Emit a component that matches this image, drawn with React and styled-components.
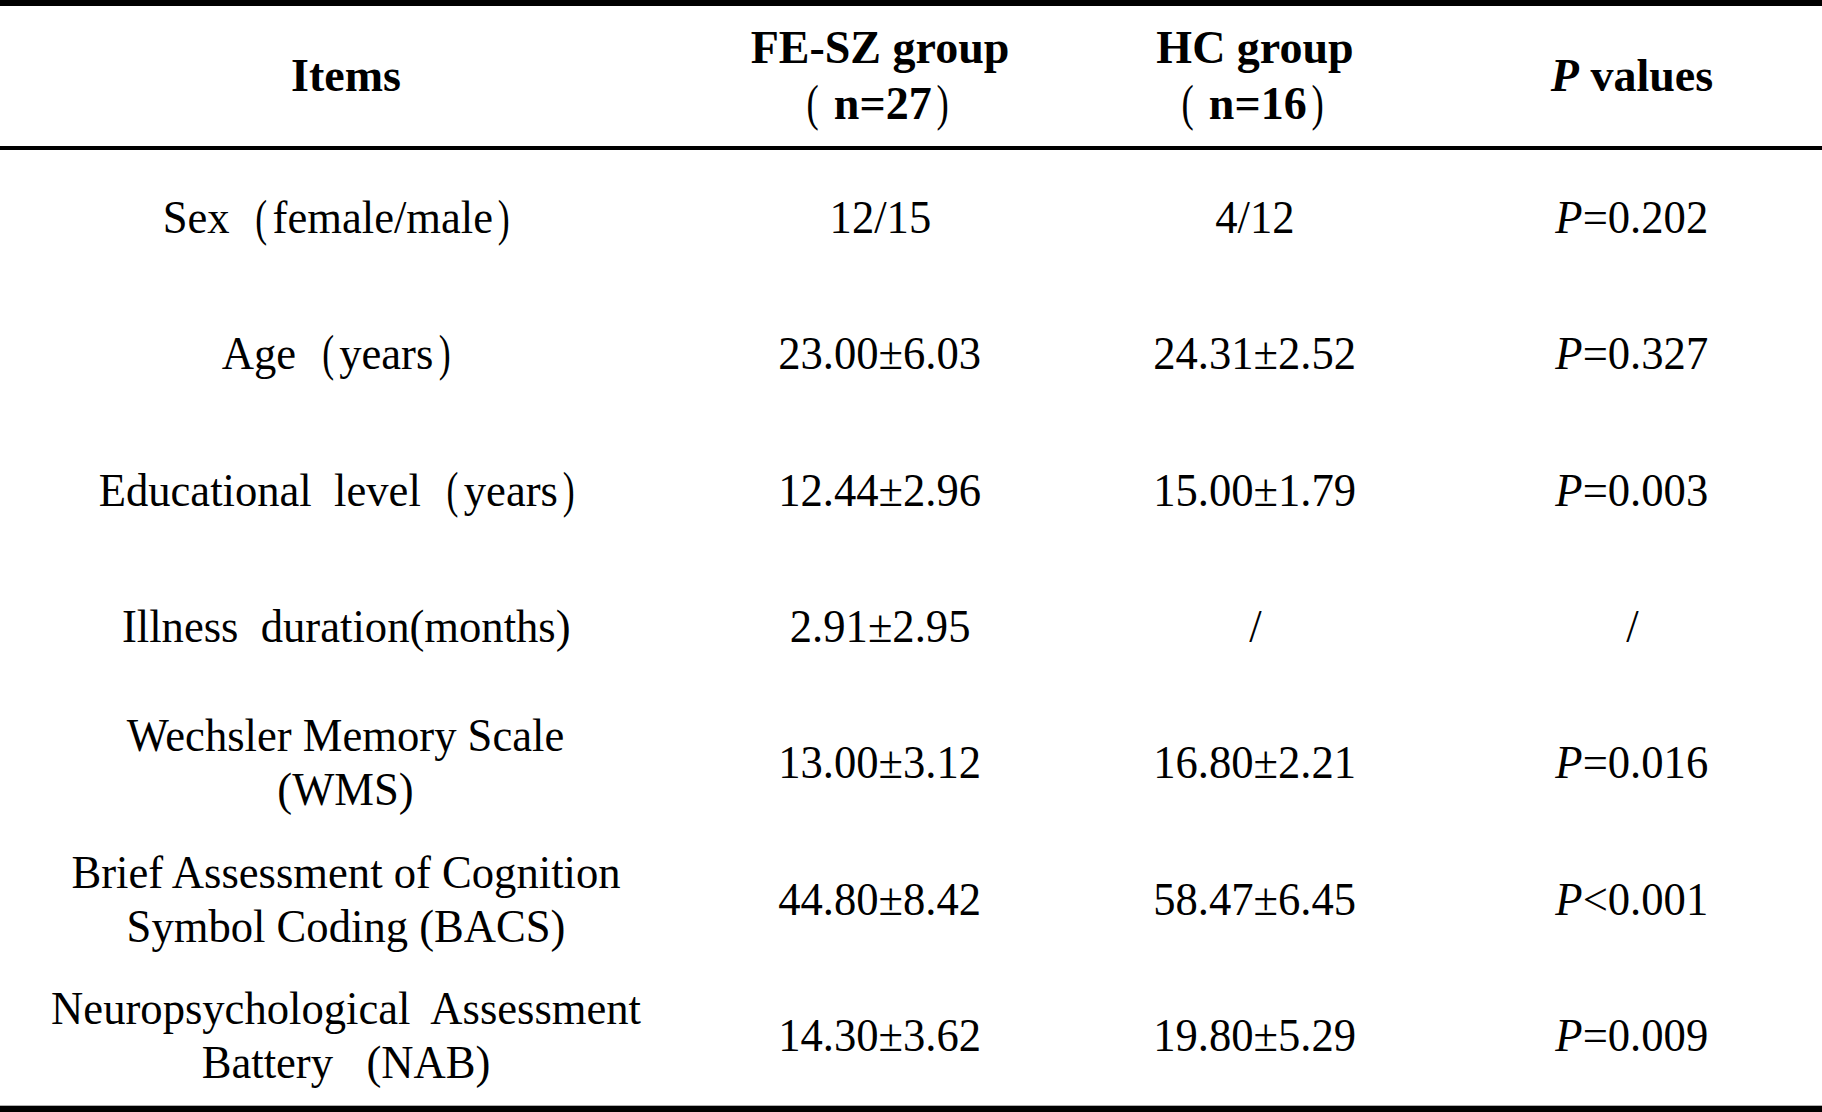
import React from 'react';
import styled, { createGlobalStyle } from 'styled-components';

// full-width brackets in the source are drawn as thin parens with wide side bearings
const withParens = (text, head) =>
  text.split(/([（）])/).map((part, i) => {
    if (part === '（') return <Paren key={i} $open $head={head}>(</Paren>;
    if (part === '）') return <Paren key={i} $head={head}>)</Paren>;
    return part;
  });

const rows = [
  { item: ['Sex（female/male）'], sz: '12/15', hc: '4/12', p: ['=', '0.202'] },
  { item: ['Age（years）'], sz: '23.00±6.03', hc: '24.31±2.52', p: ['=', '0.327'] },
  { item: ['Educational  level（years）'], sz: '12.44±2.96', hc: '15.00±1.79', p: ['=', '0.003'] },
  { item: ['Illness  duration(months)'], sz: '2.91±2.95', hc: '/', p: null },
  { item: ['Wechsler Memory Scale', '(WMS)'], sz: '13.00±3.12', hc: '16.80±2.21', p: ['=', '0.016'] },
  { item: ['Brief Assessment of Cognition', 'Symbol Coding (BACS)'], sz: '44.80±8.42', hc: '58.47±6.45', p: ['<', '0.001'] },
  { item: ['Neuropsychological  Assessment', 'Battery   (NAB)'], sz: '14.30±3.62', hc: '19.80±5.29', p: ['=', '0.009'] },
];

const App = () => {
  return (
    <>
      <GlobalStyle />
      <Table>
        <HeaderRow>
          <HeadCell><HeadText>Items</HeadText></HeadCell>
          <HeadCell><HeadText>FE-SZ group<br />{withParens('（n=27）', true)}</HeadText></HeadCell>
          <HeadCell><HeadText>HC group<br />{withParens('（n=16）', true)}</HeadText></HeadCell>
          <HeadCell><HeadText><i>P</i> values</HeadText></HeadCell>
        </HeaderRow>
        <Body>
          {rows.map((row) => (
            <Row key={row.item[0]}>
              <Cell>
                <Text>
                  {row.item.map((line, i) => (
                    <React.Fragment key={line}>
                      {i > 0 && <br />}
                      {withParens(line, false)}
                    </React.Fragment>
                  ))}
                </Text>
              </Cell>
              <Cell><Text>{row.sz}</Text></Cell>
              <Cell><Text>{row.hc}</Text></Cell>
              <Cell>
                <Text>
                  {row.p ? (
                    <>
                      <i>P</i>{row.p[0]}{row.p[1]}
                    </>
                  ) : '/'}
                </Text>
              </Cell>
            </Row>
          ))}
        </Body>
      </Table>
    </>
  );
};

export default App;

const GlobalStyle = createGlobalStyle`
  html, body {
    margin: 0;
    padding: 0;
    background: #ffffff;
  }
  body {
    font-family: 'Liberation Serif', 'Noto Sans CJK SC', serif;
    color: #000000;
  }
`;

const Table = styled.div`
  width: 1822px;
  height: 1112px;
  display: flex;
  flex-direction: column;
  border-top: 6px solid #000000;
  border-bottom: 6px solid #000000;
  box-sizing: border-box;
`;

const HeaderRow = styled.div`
  display: grid;
  grid-template-columns: 692px 376px 374px 1fr;
  height: 140px;
  border-bottom: 4px solid #000000;
  font-weight: bold;
  font-size: 46px;
  line-height: 56px;
`;

const HeadCell = styled.div`
  display: flex;
  align-items: center;
  justify-content: center;
  text-align: center;
`;

const Body = styled.div`
  flex: 1;
  display: grid;
  grid-template-rows: repeat(7, 1fr);
  padding-bottom: 1px;
  border-bottom: 1px solid #b0b0b0;
`;

const Row = styled.div`
  display: grid;
  grid-template-columns: 692px 376px 374px 1fr;
  font-size: 46px;
  line-height: 54px;
`;

const Cell = styled.div`
  display: flex;
  align-items: center;
  justify-content: center;
  text-align: center;
`;

const Text = styled.span`
  display: inline-block;
  white-space: pre;
  transform: scaleX(0.97);
`;

const HeadText = styled.span`
  display: inline-block;
  white-space: pre;
`;

const Paren = styled.span`
  display: inline-block;
  font-weight: normal;
  transform: scale(0.8, 1.1);
  margin-left: ${(p) => (p.$open ? (p.$head ? '0.3em' : '0.55em') : '0.08em')};
  margin-right: ${(p) => (p.$open ? (p.$head ? '0.3em' : '0.08em') : '0.4em')};
`;
